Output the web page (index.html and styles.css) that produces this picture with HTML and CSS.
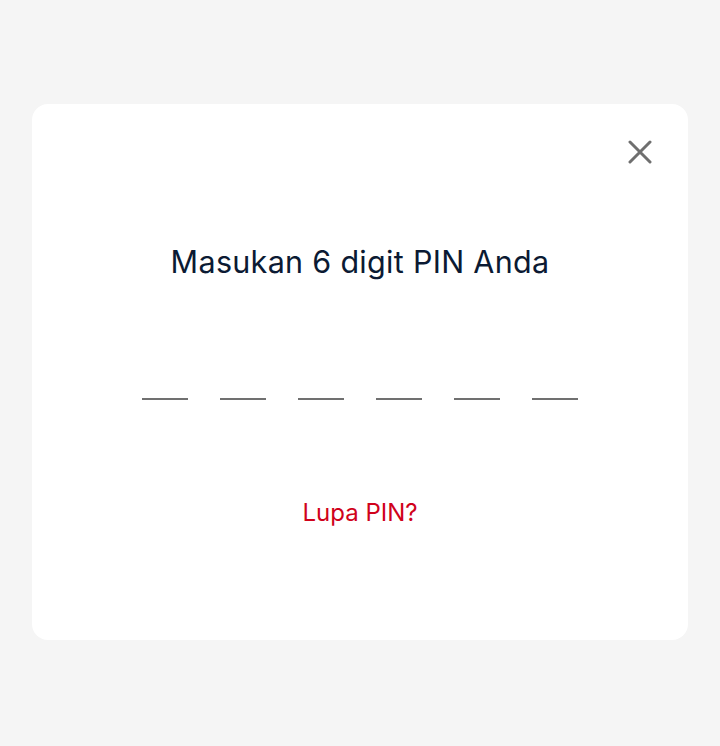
FILE: index.html
```html
<!DOCTYPE html>
<html lang="id">
<head>
<meta charset="utf-8">
<title>PIN</title>
<link rel="stylesheet" href="styles.css">
</head>
<body>
<div class="page">
  <div class="card">
    <div class="card-head">
      <button class="close" aria-label="Tutup">
        <svg width="24" height="24" viewBox="0 0 24 24"><path d="M2 2L22 22M22 2L2 22" stroke="#6f6f6f" stroke-width="3" stroke-linecap="round"/></svg>
      </button>
    </div>
    <h1 class="title">Masukan 6 digit PIN Anda</h1>
    <div class="pin">
      <span class="slot"></span>
      <span class="slot"></span>
      <span class="slot"></span>
      <span class="slot"></span>
      <span class="slot"></span>
      <span class="slot"></span>
    </div>
    <a class="forgot" href="#">Lupa PIN?</a>
  </div>
</div>
</body>
</html>
```
FILE: styles.css
```css
html, body {
  margin: 0;
  padding: 0;
  background: #f5f5f5;
  font-family: Inter, "Noto Sans", sans-serif;
}
.page {
  width: 720px;
  height: 746px;
  padding: 104px 32px 0;
  box-sizing: border-box;
}
.card {
  background: #ffffff;
  border-radius: 16px;
  height: 536px;
  box-sizing: border-box;
  padding: 36px 36px 0;
  display: flex;
  flex-direction: column;
  align-items: center;
}
.card-head {
  align-self: stretch;
  display: flex;
  justify-content: flex-end;
  height: 24px;
}
.close {
  width: 24px;
  height: 24px;
  padding: 0;
  border: 0;
  background: none;
  display: block;
}
.close svg { display: block; }
.title {
  margin: 80px 0 0;
  font-size: 30.5px;
  font-weight: 400;
  color: #0b1a33;
  line-height: 36px;
  letter-spacing: 0.3px;
}
.pin {
  margin-top: 118px;
  display: flex;
  gap: 32px;
}
.slot {
  display: block;
  width: 46px;
  height: 2px;
  background: #707070;
}
.forgot {
  margin-top: 98px;
  font-size: 24px;
  line-height: 30px;
  color: #d0021b;
  text-decoration: none;
}
```
